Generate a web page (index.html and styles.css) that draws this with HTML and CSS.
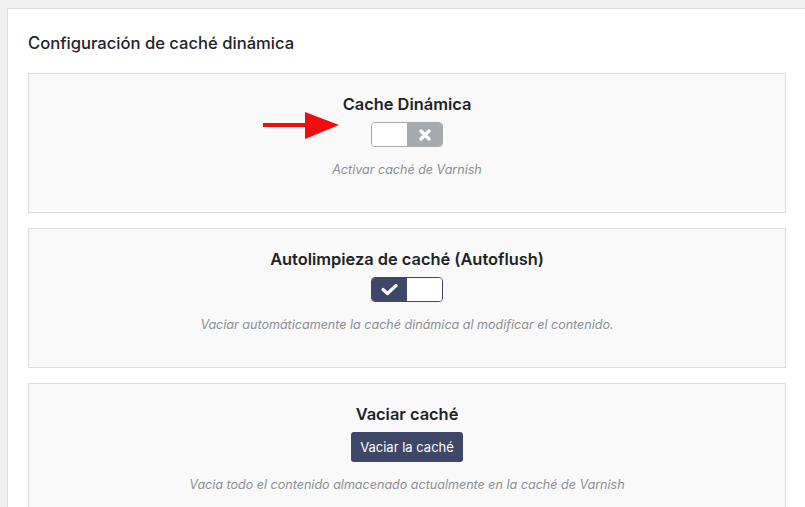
FILE: index.html
```html
<!DOCTYPE html>
<html lang="es">
<head>
<meta charset="utf-8">
<link rel="stylesheet" href="styles.css">
</head>
<body>
<div class="panel">
  <h2 class="panel-title">Configuración de caché dinámica</h2>
  <div class="box">
    <h3 class="box-title">Cache Dinámica</h3>
    <div class="control">
      <div class="toggle off">
        <span class="half blank"></span>
        <span class="half mark off-mark">
          <svg width="12" height="12" viewBox="0 0 12 12"><path d="M2 2 L10 10 M10 2 L2 10" stroke="#fff" stroke-width="3.2" stroke-linecap="round"/></svg>
        </span>
      </div>
      <svg class="arrow" width="78" height="30" viewBox="0 0 78 30"><path d="M0 14 H44" stroke="#f20d0d" stroke-width="4"/><path d="M42 1 L76 14 L42 28 Z" fill="#f20d0d"/></svg>
    </div>
    <p class="desc">Activar caché de Varnish</p>
  </div>
  <div class="box">
    <h3 class="box-title">Autolimpieza de caché (Autoflush)</h3>
    <div class="control">
      <div class="toggle on">
        <span class="half mark on-mark">
          <svg width="17" height="13" viewBox="0 0 17 13"><path d="M2 6.5 L6.5 10.5 L15 2.5" stroke="#fff" stroke-width="3.2" fill="none" stroke-linecap="round" stroke-linejoin="round"/></svg>
        </span>
        <span class="half blank"></span>
      </div>
    </div>
    <p class="desc">Vaciar automáticamente la caché dinámica al modificar el contenido.</p>
  </div>
  <div class="box">
    <h3 class="box-title">Vaciar caché</h3>
    <div class="control">
      <button class="btn">Vaciar la caché</button>
    </div>
    <p class="desc desc-low">Vacia todo el contenido almacenado actualmente en la caché de Varnish</p>
  </div>
</div>
</body>
</html>
```

FILE: styles.css
```css
html, body {
  margin: 0;
  padding: 0;
  background: #f0f0f1;
  font-family: Inter, "Liberation Sans", sans-serif;
  color: #1d2327;
  overflow: hidden;
}
.panel {
  margin: 8px 0 0 7px;
  width: 820px;
  background: #fff;
  border: 1px solid #dcdcde;
  padding: 22px 20px 0 20px;
  box-sizing: border-box;
  height: 600px;
}
.panel-title {
  margin: 0 0 18px 0;
  font-size: 16.6px;
  font-weight: 500;
  line-height: 24px;
}
.box {
  width: 758px;
  height: 140px;
  box-sizing: border-box;
  border: 1px solid #dcdcde;
  background: #f9f9f9;
  margin-bottom: 15px;
  display: flex;
  flex-direction: column;
  align-items: center;
  padding-top: 19px;
}
.box-title {
  margin: 0;
  font-size: 16.4px;
  font-weight: 600;
  line-height: 22px;
}
.control {
  position: relative;
  margin-top: 7px;
  height: 30px;
  display: flex;
  align-items: flex-start;
}
.toggle {
  display: flex;
  width: 72px;
  height: 25px;
  box-sizing: border-box;
  border-radius: 4px;
  overflow: hidden;
}
.toggle.off { border: 1px solid #a7aaad; }
.toggle.on { border: 1px solid #3d4768; }
.half {
  flex: 1;
  display: flex;
  align-items: center;
  justify-content: center;
}
.blank { background: #fff; }
.off-mark { background: #a7aaad; }
.on-mark { background: #3d4768; }
.arrow {
  position: absolute;
  left: -108px;
  top: -11px;
}
.btn {
  width: 112px;
  height: 30px;
  border: none;
  border-radius: 3px;
  background: #3d4768;
  color: #fff;
  font-family: Inter, "Liberation Sans", sans-serif;
  font-size: 13px;
  padding: 0;
}
.desc {
  margin: 9px 0 0 0;
  font-size: 12.55px;
  font-style: italic;
  color: #8c8f94;
  line-height: 18px;
}
.desc-low {
  margin-top: 14px;
}
```
